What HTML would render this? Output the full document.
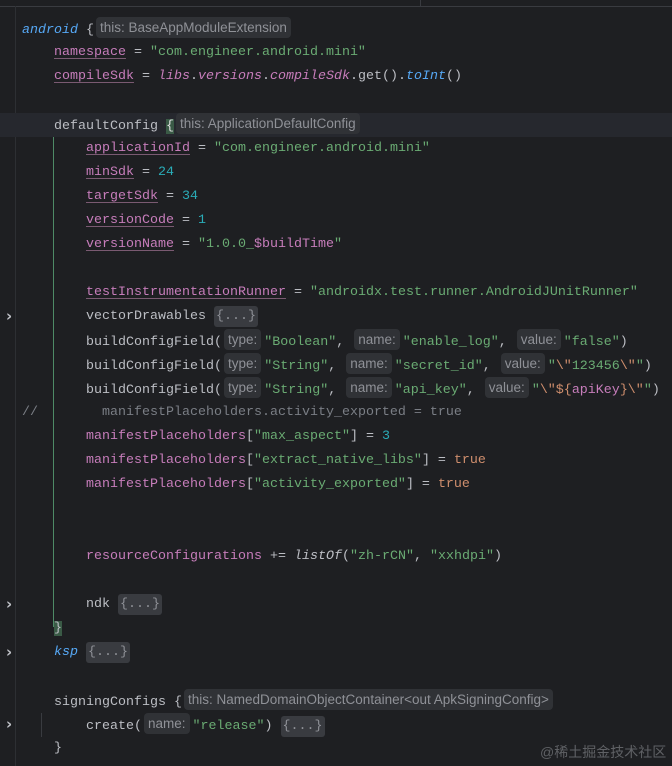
<!DOCTYPE html><html><head><meta charset="utf-8"><style>
body{margin:0;width:672px;height:766px;background:#1e1f22;overflow:hidden;position:relative;font-family:"Liberation Mono",monospace;font-size:13.33px;color:#bcbec4}
.l{position:absolute;left:0;height:24px;line-height:24px;white-space:pre}
.p{color:#c77dbb;text-decoration:underline;text-decoration-color:#7a5a72;text-underline-offset:3px}
.pp{color:#c77dbb}
.s{color:#6aab73}.n{color:#2aacb8}.k{color:#cf8e6d}.i{font-style:italic}
.b{color:#56a8f5;font-style:italic}.c{color:#7a7e85}
.h{display:inline-block;background:#303236;border-radius:4px;font-family:"Liberation Sans",sans-serif;font-size:13.5px;color:#8f9197;padding:0 4px;line-height:21px;height:21px;vertical-align:1px;margin:0 3px 0 2px}
.f{display:inline-block;background:#393b40;border-radius:3px;color:#8f9197;line-height:21px;padding:0 2px}
.ch{position:absolute;left:6px;color:#c0c2c8;font-family:"DejaVu Sans",sans-serif;font-size:15px;font-weight:bold}
</style></head><body>
<div style="position:absolute;left:0;top:6px;width:672px;height:1px;background:#393b40"></div>
<div style="position:absolute;left:420px;top:0;width:1px;height:6px;background:#393b40"></div>
<div style="position:absolute;left:15px;top:6px;width:1px;height:760px;background:#2d2f33"></div>
<div style="position:absolute;left:0;top:113px;width:672px;height:24px;background:#26282e"></div>
<div style="position:absolute;left:53px;top:137px;width:1px;height:490px;background:#4e8a66"></div>
<div style="position:absolute;left:41px;top:713px;width:1px;height:24px;background:#393b40"></div>

<div class="l" style="top:17px;left:22px"><span class="b">android</span> {<span class="h">this: BaseAppModuleExtension</span></div>
<div class="l" style="top:41px;left:54px"><span class="p">namespace</span> = <span class="s">"com.engineer.android.mini"</span></div>
<div class="l" style="top:65px;left:54px"><span class="p">compileSdk</span> = <span class="pp i">libs</span>.<span class="pp i">versions</span>.<span class="pp i">compileSdk</span>.get().<span class="b">toInt</span>()</div>
<div class="l" style="top:113px;left:54px">defaultConfig <span style="background:#3a5a46;color:#e0e0e0">{</span><span class="h">this: ApplicationDefaultConfig</span></div>
<div class="l" style="top:137px;left:86px"><span class="p">applicationId</span> = <span class="s">"com.engineer.android.mini"</span></div>
<div class="l" style="top:161px;left:86px"><span class="p">minSdk</span> = <span class="n">24</span></div>
<div class="l" style="top:185px;left:86px"><span class="p">targetSdk</span> = <span class="n">34</span></div>
<div class="l" style="top:209px;left:86px"><span class="p">versionCode</span> = <span class="n">1</span></div>
<div class="l" style="top:233px;left:86px"><span class="p">versionName</span> = <span class="s">"1.0.0_</span><span class="pp">$buildTime</span><span class="s">"</span></div>
<div class="l" style="top:281px;left:86px"><span class="p">testInstrumentationRunner</span> = <span class="s">"androidx.test.runner.AndroidJUnitRunner"</span></div>
<div class="ch" style="top:307px">›</div>
<div class="l" style="top:305px;left:86px">vectorDrawables <span class="f">{...}</span></div>
<div class="l" style="top:329px;left:86px">buildConfigField(<span class="h">type:</span><span class="s">"Boolean"</span>, <span class="h">name:</span><span class="s">"enable_log"</span>, <span class="h">value:</span><span class="s">"false"</span>)</div>
<div class="l" style="top:353px;left:86px">buildConfigField(<span class="h">type:</span><span class="s">"String"</span>, <span class="h">name:</span><span class="s">"secret_id"</span>, <span class="h">value:</span><span class="s">"</span><span class="k">\"</span><span class="s">123456</span><span class="k">\"</span><span class="s">"</span>)</div>
<div class="l" style="top:377px;left:86px">buildConfigField(<span class="h">type:</span><span class="s">"String"</span>, <span class="h">name:</span><span class="s">"api_key"</span>, <span class="h">value:</span><span class="s">"</span><span class="k">\"${</span><span class="pp">apiKey</span><span class="k">}\"</span><span class="s">"</span>)</div>
<div class="l c" style="top:401px;left:22px">//</div>
<div class="l c" style="top:401px;left:102px">manifestPlaceholders.activity_exported = true</div>
<div class="l" style="top:425px;left:86px"><span class="pp">manifestPlaceholders</span>[<span class="s">"max_aspect"</span>] = <span class="n">3</span></div>
<div class="l" style="top:449px;left:86px"><span class="pp">manifestPlaceholders</span>[<span class="s">"extract_native_libs"</span>] = <span class="k">true</span></div>
<div class="l" style="top:473px;left:86px"><span class="pp">manifestPlaceholders</span>[<span class="s">"activity_exported"</span>] = <span class="k">true</span></div>
<div class="l" style="top:545px;left:86px"><span class="pp">resourceConfigurations</span> += <span class="i">listOf</span>(<span class="s">"zh-rCN"</span>, <span class="s">"xxhdpi"</span>)</div>
<div class="ch" style="top:595px">›</div>
<div class="l" style="top:593px;left:86px">ndk <span class="f">{...}</span></div>
<div class="l" style="top:617px;left:54px"><span style="background:#3a5a46">}</span></div>
<div class="ch" style="top:643px">›</div>
<div class="l" style="top:641px;left:54px"><span class="b">ksp</span> <span class="f">{...}</span></div>
<div class="l" style="top:689px;left:54px">signingConfigs {<span class="h">this: NamedDomainObjectContainer&lt;out ApkSigningConfig&gt;</span></div>
<div class="ch" style="top:715px">›</div>
<div class="l" style="top:713px;left:86px">create(<span class="h">name:</span><span class="s">"release"</span>) <span class="f">{...}</span></div>
<div class="l" style="top:737px;left:54px">}</div>
<div style="position:absolute;left:540px;top:742px;font-family:'Liberation Sans','Noto Sans CJK SC',sans-serif;font-size:14px;color:#5f6165">@稀土掘金技术社区</div>
</body></html>
